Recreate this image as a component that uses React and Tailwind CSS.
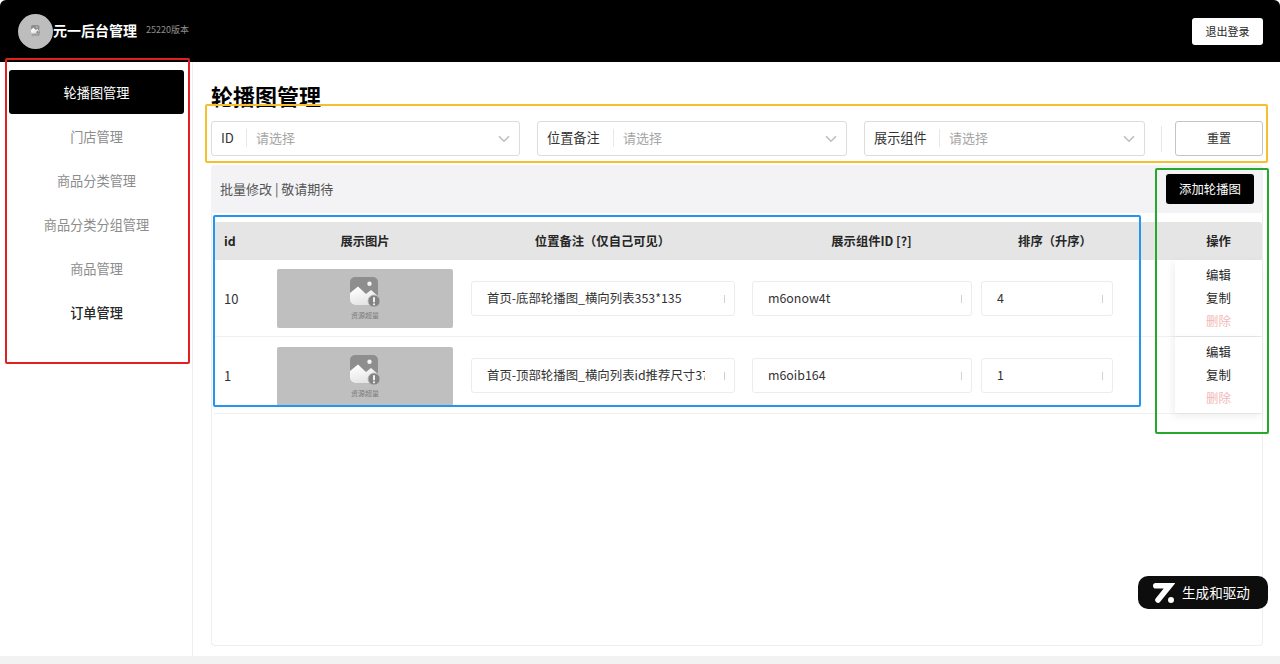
const menu = [
  { name: "轮播图管理", className: "bg-black text-white rounded-[3px]" },
  { name: "门店管理", className: "text-[#8c8c8c]" },
  { name: "商品分类管理", className: "text-[#8c8c8c]" },
  { name: "商品分类分组管理", className: "text-[#8c8c8c]" },
  { name: "商品管理", className: "text-[#8c8c8c]" },
  { name: "订单管理", className: "text-[#262626] font-medium" },
];

const filters = [
  { label: "ID", className: "w-[309px]", labelWidth: "w-[26px]" },
  { label: "位置备注", className: "w-[310px]", labelWidth: "w-[67px]" },
  { label: "展示组件", className: "w-[281px]", labelWidth: "w-[66px]" },
];

const rows = [
  { id: "10", note: "首页-底部轮播图_横向列表353*135", comp: "m6onow4t", sort: "4", imageClass: "" },
  { id: "1", note: "首页-顶部轮播图_横向列表id推荐尺寸375*180", comp: "m6oib164", sort: "1", imageClass: "mt-[2px]" },
];

const rowGrid = "grid grid-cols-[54px_194px_281px_229px_150px_53px_87px]";

function ResourceIcon({ className }) {
  return (
    <svg viewBox="0 0 30 30" className={className}>
      <defs>
        <linearGradient id="hill" x1="0.3" y1="0" x2="0.7" y2="1">
          <stop offset="0" stopColor="#ffffff" />
          <stop offset="1" stopColor="#e2e2e2" />
        </linearGradient>
      </defs>
      <rect x="0" y="0" width="28" height="28" rx="5" fill="#8e8e8e" />
      <circle cx="19.5" cy="6.8" r="2.2" fill="#f4f4f4" />
      <path d="M0 16 L8 9.5 L16 17 L21 13 L28 19 L28 23 A5 5 0 0 1 23 28 L5 28 A5 5 0 0 1 0 23 Z" fill="url(#hill)" />
      <circle cx="24" cy="24" r="6" fill="#838383" stroke="#bdbdbd" strokeWidth="0.8" />
      <rect x="23" y="20" width="2" height="5.4" rx="1" fill="#f2f2f2" />
      <circle cx="24" cy="27.3" r="1.1" fill="#f2f2f2" />
    </svg>
  );
}

function CellInput({ value, className }) {
  return (
    <div className={`relative h-[35px] rounded-[3px] border border-[#ececec] bg-white ${className}`}>
      <input
        readOnly
        value={value}
        className="h-full w-full bg-transparent pl-[15px] pr-[29px] text-[12.4px] text-[#333] outline-none"
      />
      <span className="absolute right-[9px] top-[13px] h-[8px] w-px bg-[#d0d0d0]" />
    </div>
  );
}

function Actions() {
  return (
    <div className="flex h-full flex-col items-center justify-center gap-[6px] bg-white text-[12.4px] leading-[17px] shadow-[-2px_3px_8px_rgba(0,0,0,0.07)]">
      <span className="text-[#262626]">编辑</span>
      <span className="text-[#262626]">复制</span>
      <span className="text-[#f2b8b8]">删除</span>
    </div>
  );
}

export default function App() {
  return (
    <div className="relative flex h-[664px] w-[1280px] flex-col overflow-hidden bg-white font-['Noto_Sans_CJK_SC','Noto_Sans',sans-serif]">
      <header className="flex h-[62px] shrink-0 items-center rounded-t-[6px] bg-black pl-[18px] pr-[17px]">
        <div className="flex h-[35px] w-[35px] items-center justify-center rounded-full bg-[#bdbdbd]">
          <div className="flex flex-col items-center">
            <ResourceIcon className="h-[9px] w-[9px]" />
            <span className="text-[2px] leading-[3px] text-[#777]">资源超量</span>
          </div>
        </div>
        <span className="pb-[2px] text-[14px] font-bold text-white">元一后台管理</span>
        <span className="ml-[9px] pb-[2px] text-[9px] text-[#8f8f8f]">25220版本</span>
        <button className="ml-auto h-[27px] w-[71px] rounded-[3px] bg-white text-[11px] text-[#262626]">退出登录</button>
      </header>

      <div className="flex min-h-0 flex-1">
        <aside className="w-[193px] shrink-0 border-r border-[#eeeeee] px-[9px] pt-[8px]">
          {menu.map((item) => (
            <div
              key={item.name}
              className={`flex h-[44px] w-[175px] items-center justify-center pt-px text-[13.2px] ${item.className}`}
            >
              {item.name}
            </div>
          ))}
        </aside>

        <main className="flex min-w-0 flex-1 flex-col pb-[10px] pl-[18px] pr-[17px]">
          <div className="h-[46px] shrink-0 overflow-hidden pt-[18px]">
            <h1 className="text-[22px] font-bold leading-[30px] text-black">轮播图管理</h1>
          </div>

          <div className="flex shrink-0 items-center pt-[13px]">
            <div className="flex items-center gap-[17px]">
              {filters.map((f) => (
                <div
                  key={f.label}
                  className={`flex h-[35px] items-center rounded-[3px] border border-[#dcdcdc] pb-[2px] pl-[9px] pr-[9px] ${f.className}`}
                >
                  <span className={`${f.labelWidth} shrink-0 border-r border-[#e8e8e8] text-[13.2px] leading-[18px] text-[#333]`}>
                    {f.label}
                  </span>
                  <span className="ml-[9px] flex-1 text-[13px] text-[#a6a6a6]">请选择</span>
                  <svg viewBox="0 0 12 8" className="mt-[2px] h-[8px] w-[12px]" fill="none" stroke="#bdbdbd" strokeWidth="1.5">
                    <path d="M1 1.2 L6 6.2 L11 1.2" />
                  </svg>
                </div>
              ))}
            </div>
            <span className="ml-[16px] h-[26px] w-px shrink-0 bg-[#e6e6e6]" />
            <button className="ml-[13px] h-[35px] w-[88px] rounded-[3px] border border-[#c4c4c4] pb-[2px] text-[12px] text-[#333]">
              重置
            </button>
          </div>

          <div className="mt-[9px] flex h-[48px] shrink-0 items-center justify-between rounded-[3px] bg-[#f3f3f5] pl-[9px] pr-[9px]">
            <span className="text-[13px] text-[#555]">批量修改 | 敬请期待</span>
            <button className="h-[30px] w-[88px] rounded-[3px] bg-black text-[12.4px] text-white">添加轮播图</button>
          </div>

          <div className="min-h-0 flex-1 rounded-b-[4px] border border-t-0 border-[#eeeeee] pl-[2px] pt-[9px]">
            <div className={`${rowGrid} h-[38px] items-center rounded-t-[3px] bg-[#e5e5e5] text-center text-[12.3px] font-bold text-[#262626]`}>
              <span className="pl-[10px] text-left">id</span>
              <span>展示图片</span>
              <span>位置备注（仅自己可见）</span>
              <span className="pl-[28px]">展示组件ID [?]</span>
              <span className="pl-[16px]">排序（升序）</span>
              <span />
              <span>操作</span>
            </div>
            {rows.map((row) => (
              <div key={row.id} className={`${rowGrid} h-[77px] items-center border-b border-[#f0f0f0] text-[13px] text-[#333]`}>
                <span className="pl-[10px] pt-[2px]">{row.id}</span>
                <div className="px-[9px]">
                  <div className={`flex h-[59px] flex-col items-center justify-center rounded-[2px] bg-[#bfbfbf] ${row.imageClass}`}>
                    <ResourceIcon className="h-[30px] w-[30px]" />
                    <span className="mt-[3px] text-[7px] leading-[10px] text-[#7d7d7d]">资源超量</span>
                  </div>
                </div>
                <CellInput value={row.note} className="ml-[9px] w-[264px]" />
                <CellInput value={row.comp} className="ml-[9px] w-[220px]" />
                <CellInput value={row.sort} className="ml-[9px] w-[132px]" />
                <span />
                <Actions />
              </div>
            ))}
          </div>
        </main>
      </div>

      <div className="h-[8px] shrink-0 bg-[#f2f2f2]" />

      <div className="absolute left-[1138px] top-[576px] flex h-[33px] w-[130px] items-center rounded-[10px] bg-[#0d0d0d] pl-[15px] text-[13.6px] text-white">
        <svg viewBox="0 0 22 20" className="h-[20px] w-[22px]" fill="#ffffff">
          <path d="M2.8 2.8 H16.5 L5 17" fill="none" stroke="#ffffff" strokeWidth="5.6" strokeLinecap="round" />
          <circle cx="18" cy="17" r="3" />
        </svg>
        <span className="ml-[7px] pb-px">生成和驱动</span>
      </div>

      {/* annotation frames drawn over the page */}
      <div className="pointer-events-none absolute left-[5px] top-[58px] h-[306px] w-[185px] rounded-[2px] border-[2px] border-[#e0201e]" />
      <div className="pointer-events-none absolute left-[205px] top-[104px] h-[59px] w-[1063px] rounded-[2px] border-[2px] border-[#f6c02d]" />
      <div className="pointer-events-none absolute left-[213px] top-[215px] h-[192px] w-[928px] rounded-[2px] border-[2px] border-[#2196f3]" />
      <div className="pointer-events-none absolute left-[1155px] top-[168px] h-[266px] w-[114px] rounded-[2px] border-[2px] border-[#27a82b]" />
    </div>
  );
}
